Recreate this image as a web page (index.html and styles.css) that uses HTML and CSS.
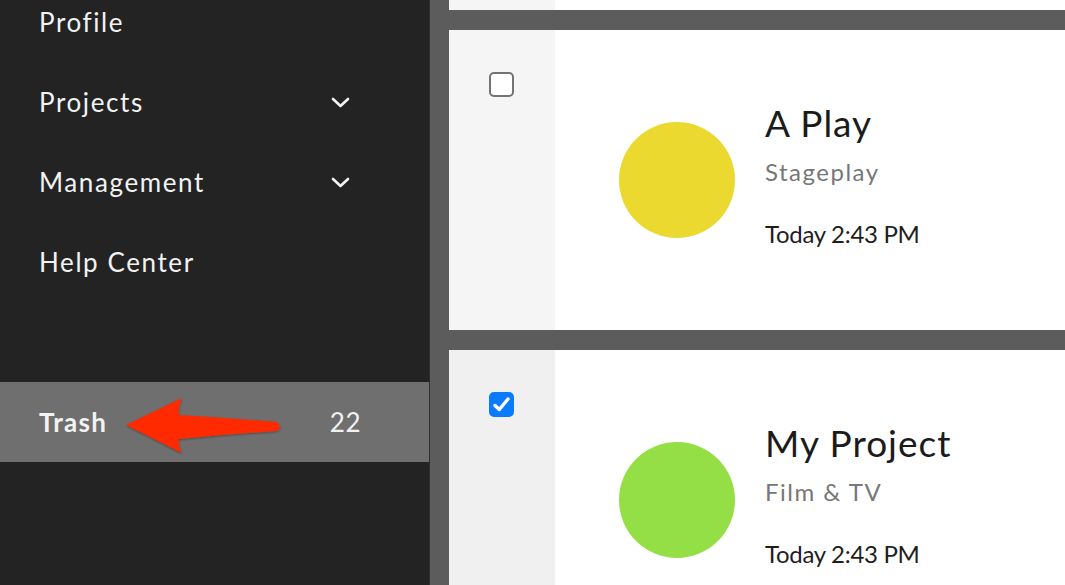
FILE: index.html
```html
<!DOCTYPE html>
<html lang="en">
<head>
<meta charset="utf-8">
<title>Projects</title>
<link rel="stylesheet" href="styles.css">
</head>
<body>
<div class="app">
  <nav class="sidebar">
    <ul class="nav">
      <li class="nav-item"><span class="label">Profile</span></li>
      <li class="nav-item"><span class="label">Projects</span>
        <svg class="chev" width="19" height="11" viewBox="0 0 19 11"><polyline points="2,2 9.5,9 17,2" fill="none" stroke="#f2f2f2" stroke-width="2.6" stroke-linecap="round" stroke-linejoin="round"/></svg>
      </li>
      <li class="nav-item"><span class="label">Management</span>
        <svg class="chev" width="19" height="11" viewBox="0 0 19 11"><polyline points="2,2 9.5,9 17,2" fill="none" stroke="#f2f2f2" stroke-width="2.6" stroke-linecap="round" stroke-linejoin="round"/></svg>
      </li>
      <li class="nav-item"><span class="label">Help Center</span></li>
      <li class="nav-spacer"></li>
      <li class="nav-item trash"><span class="label">Trash</span><span class="count">22</span>
        <svg class="arrow" width="300" height="80" viewBox="0 0 300 80">
          <defs>
            <filter id="sh" x="-10%" y="-30%" width="120%" height="160%">
              <feDropShadow dx="0" dy="1" stdDeviation="1.2" flood-color="#000" flood-opacity="0.35"/>
            </filter>
          </defs>
          <path filter="url(#sh)" fill="#ff2a06" d="M126 43 L182 16 Q178 24 179 33 Q230 36 277 40 Q283 45 277 49 Q230 52 179 57 Q178 63 182 71 Z"/>
        </svg>
      </li>
    </ul>
  </nav>
  <main class="main">
    <div class="cards">
      <section class="card">
        <div class="card-side"></div>
        <div class="card-body"></div>
      </section>
      <section class="card">
        <div class="card-side"><span class="check"></span></div>
        <div class="card-body">
          <div class="avatar yellow"></div>
          <div class="info">
            <h2 class="title">A Play</h2>
            <div class="type">Stageplay</div>
            <div class="date">Today 2:43 PM</div>
          </div>
        </div>
      </section>
      <section class="card selected">
        <div class="card-side"><span class="check checked">
          <svg width="19" height="17" viewBox="0 0 19 17"><polyline points="3,9.5 7.3,13.5 16,3" fill="none" stroke="#fff" stroke-width="3.4" stroke-linecap="round" stroke-linejoin="round"/></svg>
        </span></div>
        <div class="card-body">
          <div class="avatar green"></div>
          <div class="info">
            <h2 class="title">My Project</h2>
            <div class="type">Film &amp; TV</div>
            <div class="date">Today 2:43 PM</div>
          </div>
        </div>
      </section>
    </div>
  </main>
</div>
</body>
</html>
```

FILE: styles.css
```css
* { box-sizing: border-box; }
html, body { margin: 0; padding: 0; }
body {
  font-family: Lato, "Open Sans", sans-serif;
  background: #5c5c5c;
  overflow: hidden;
  height: 585px;
}
.app {
  display: flex;
  height: 585px;
}
.sidebar {
  width: 430px;
  flex: none;
  background: #232323;
  border-right: 1px solid #2e2e2e;
  overflow: hidden;
}
.nav {
  list-style: none;
  margin: -18px 0 0 0;
  padding: 0;
}
.nav-item {
  position: relative;
  height: 80px;
  display: flex;
  align-items: center;
  padding: 0 79px 0 39px;
  color: #f2f2f2;
  font-size: 26px;
  letter-spacing: 1.6px;
}
.nav-item .label { flex: 1; }
.nav-spacer { height: 80px; }
.trash {
  background: #6f6f6f;
  font-weight: 700;
  padding-right: 68px;
  letter-spacing: 1.3px;
}
.trash .count {
  font-weight: 400;
  letter-spacing: 0.5px;
}
.arrow {
  position: absolute;
  left: 0;
  top: 0;
}
.main {
  flex: 1;
  padding-left: 19px;
  overflow: hidden;
}
.cards {
  display: flex;
  flex-direction: column;
  gap: 20px;
  margin-top: -290px;
}
.card {
  height: 300px;
  display: flex;
  background: #fff;
}
.card-side {
  width: 106px;
  flex: none;
  background: #f5f5f5;
  padding: 42px 0 0 40px;
}
.card.selected .card-side { background: #f0f0f0; }
.check {
  display: flex;
  align-items: center;
  justify-content: center;
  width: 25px;
  height: 25px;
  border: 2px solid #737373;
  border-radius: 5px;
  background: #fff;
}
.check.checked {
  background: #0b7bfe;
  border-color: #0b7bfe;
}
.card-body {
  flex: 1;
  display: flex;
  align-items: center;
  padding-left: 64px;
}
.avatar {
  width: 116px;
  height: 116px;
  border-radius: 50%;
  flex: none;
}
.yellow { background: #ecd930; }
.green { background: #95df46; }
.info {
  align-self: flex-start;
  margin: 73px 0 0 30px;
}
.title {
  margin: 0;
  font-size: 37px;
  font-weight: 400;
  color: #1b1b1b;
  letter-spacing: 1px;
  line-height: 40px;
}
.type {
  margin-top: 14px;
  font-size: 24px;
  color: #777;
  letter-spacing: 1.5px;
  line-height: 30px;
}
.date {
  margin-top: 32px;
  font-size: 24px;
  color: #1e1e1e;
  line-height: 30px;
  letter-spacing: -0.3px;
}
```
